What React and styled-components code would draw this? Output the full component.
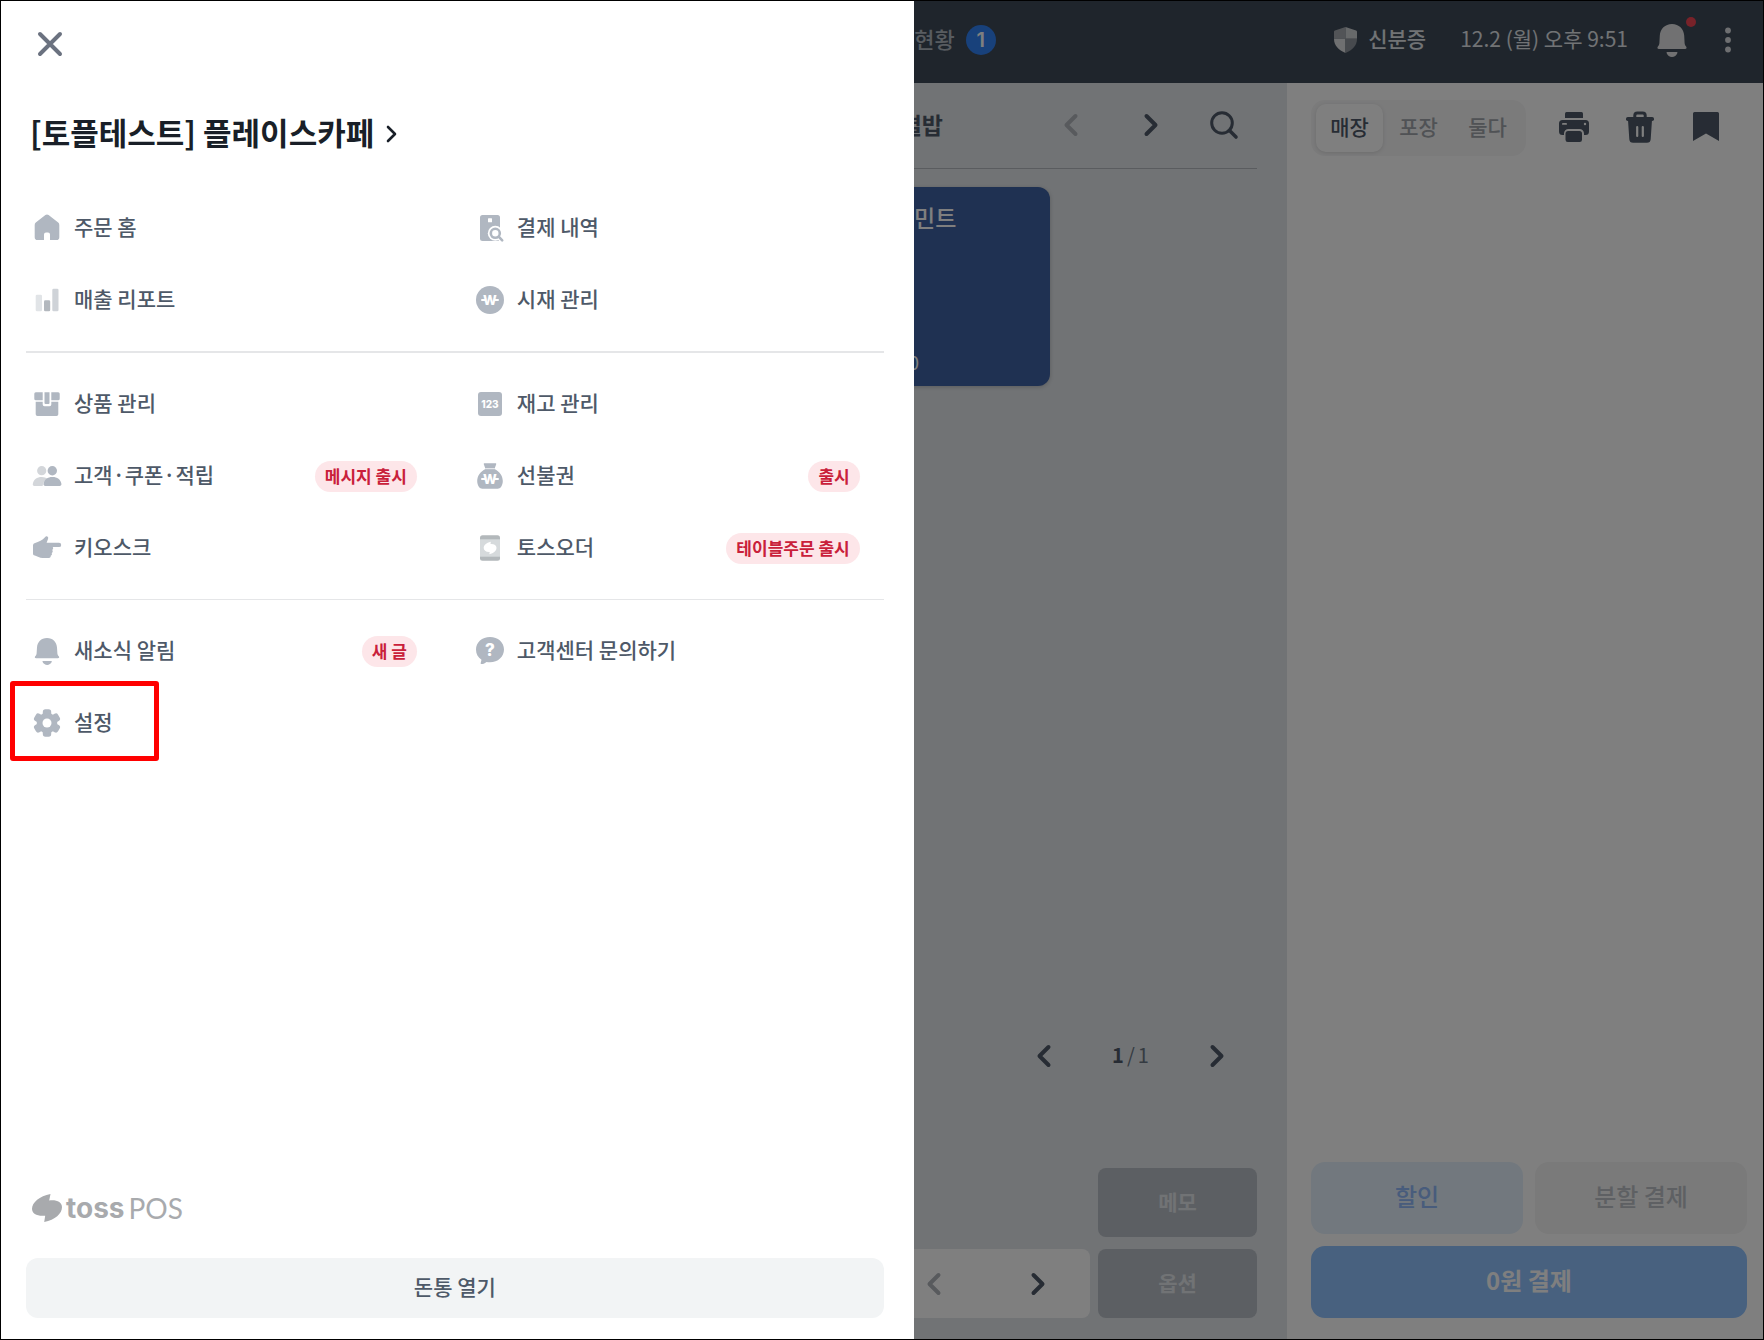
import React from "react";
import styled, { createGlobalStyle } from "styled-components";

const GlobalStyle = createGlobalStyle`
    * {
        box-sizing: border-box;
    }
    body {
        margin: 0;
        font-family: "Noto Sans CJK KR", "Noto Sans", sans-serif;
        font-size: 21px;
        line-height: 32px;
    }
    button {
        border: 0;
        padding: 0;
        background: none;
        color: inherit;
        font: inherit;
        cursor: pointer;
    }
    svg {
        display: block;
        flex: none;
        overflow: visible;
    }
`;

const Frame = styled.div`
    position: relative;
    display: flex;
    flex-direction: column;
    min-height: 100vh;
    border: 1px solid #000;
    overflow: hidden;
`;

// Korean glyphs sit low in their line box
const Label = styled.span`
    padding-bottom: 4px;
`;

/* ---------- order screen ---------- */

const TopBar = styled.header`
    display: flex;
    align-items: center;
    height: 82px;
    padding-right: 18px;
    background: #3e4a58;
    color: #e2e6ea;
`;

const TopTabs = styled.nav`
    display: flex;
    flex: 0 0 56%;
    justify-content: flex-end;
    align-items: center;
    gap: 11px;
    padding-bottom: 4px;
    color: #b0b8c1;
    font-size: 22px;
    font-weight: 500;
`;

const CountBadge = styled.span`
    width: 30px;
    height: 30px;
    margin-right: -18px;
    border-radius: 50%;
    background: #3182f6;
    color: #fff;
    font-family: Inter, sans-serif;
    font-size: 20px;
    font-weight: 600;
    line-height: 30px;
    text-align: center;
`;

const TopStatus = styled.div`
    display: flex;
    flex: 1;
    justify-content: flex-end;
    align-items: center;
    padding-bottom: 4px;
`;

const IdButton = styled.button`
    display: flex;
    align-items: center;
    gap: 11px;
    margin-right: 34px;
    font-weight: 500;
`;

const Clock = styled.time`
    padding-bottom: 4px;
`;

const BellButton = styled.button`
    position: relative;
    margin: 2px 24px 0 29px;
`;

const RedDot = styled.span`
    position: absolute;
    top: -7px;
    right: -9px;
    width: 10px;
    height: 10px;
    border-radius: 50%;
    background: #f04452;
`;

const Body = styled.div`
    display: flex;
    flex: 1;
`;

const Products = styled.main`
    display: flex;
    flex: 1;
    flex-direction: column;
    padding: 0 30px 21px 24px;
    background: #e2e6ea;
`;

const CategoryRow = styled.div`
    display: flex;
    align-items: center;
    height: 86px;
    padding-bottom: 2px;
    border-bottom: 1px solid #b4b9bf;
`;

const CategoryTabs = styled.nav`
    display: flex;
    flex: 1;
    justify-content: flex-end;
    padding: 0 88px 2px 0;
    color: #4e5968;
    font-size: 23px;
    font-weight: 700;
`;

const IconButton = styled.button`
    display: flex;
    justify-content: center;
    align-items: center;
    width: ${(props) => props.$width}px;
    height: 48px;
    color: ${(props) => (props.$faded ? "#b0b5bb" : "#4e5968")};
`;

const CardGrid = styled.div`
    display: grid;
    grid-template-columns: repeat(6, 1fr);
    gap: 8px;
    padding-top: 18px;
`;

const ProductCard = styled.button`
    display: flex;
    grid-column: 5;
    flex-direction: column;
    justify-content: space-between;
    align-items: flex-start;
    height: 199px;
    padding: 14px 20px 8px;
    border-radius: 12px;
    background: #3e62a4;
    box-shadow: 0 1px 4px rgba(0, 0, 0, 0.2);
    color: #fff;
    font-size: 23px;
    font-weight: 500;
`;

const Price = styled.span`
    font-size: 19px;
    font-weight: 400;
`;

const Pager = styled.div`
    display: flex;
    justify-content: flex-end;
    align-items: center;
    margin-top: auto;
    margin-bottom: 88px;
`;

const PageCount = styled.span`
    display: flex;
    justify-content: center;
    gap: 3px;
    width: 93px;
    padding-bottom: 2px;
    color: #6b7684;
    font-size: 20px;
    & b {
        color: #4e5968;
    }
`;

const Shortcuts = styled.div`
    display: grid;
    grid-template-columns: 1fr 159px;
    grid-auto-rows: 69px;
    gap: 12px 8px;
`;

const ShortcutBar = styled.div`
    display: flex;
    justify-content: flex-end;
    align-items: center;
    border-radius: 8px;
    background: #fff;
`;

const GrayButton = styled.button`
    grid-column: 2;
    padding-bottom: 4px;
    border-radius: 8px;
    background: #b8bec6;
    color: #e2e6ea;
    font-weight: 700;
`;

const OrderPanel = styled.aside`
    display: flex;
    flex: 0 0 476px;
    flex-direction: column;
    justify-content: space-between;
    padding: 17px 16px 21px 24px;
    background: #fff;
`;

const PanelTools = styled.div`
    display: flex;
    justify-content: space-between;
    align-items: center;
    padding-right: 8px;
`;

const Segments = styled.div`
    display: flex;
    gap: 2px;
    padding: 4px 5px;
    border-radius: 14px;
    background: #f6f6f7;
`;

const Segment = styled.button`
    width: 67px;
    height: 48px;
    padding-bottom: 4px;
    border-radius: 10px;
    background: ${(props) => (props.$active ? "#fff" : "none")};
    box-shadow: ${(props) => (props.$active ? "0 1px 4px rgba(0, 0, 0, 0.12)" : "none")};
    color: ${(props) => (props.$active ? "#4e5968" : "#a0a5ab")};
    font-weight: 500;
`;

const ToolIcons = styled.div`
    display: flex;
    padding-bottom: 3px;
`;

const PayButtons = styled.div`
    display: grid;
    grid-template-columns: 1fr 1fr;
    grid-auto-rows: 72px;
    gap: 12px;
`;

const payTones = {
    blue: "background: #e4f1fc; color: #90b8f8;",
    gray: "background: #f4f4f4; color: #bcc1c7;",
    primary: "background: #90c2fe; color: #fff; grid-column: 1 / 3; font-weight: 700;",
};

const PayButton = styled.button`
    padding-bottom: 4px;
    border-radius: 14px;
    font-size: 24px;
    font-weight: 500;
    ${(props) => payTones[props.$tone]}
`;

/* ---------- drawer ---------- */

const Backdrop = styled.div`
    position: absolute;
    inset: 0;
    background: rgba(0, 0, 0, 0.5);
`;

const Drawer = styled.div`
    display: flex;
    flex-direction: column;
    width: 51.8%;
    height: 100%;
    padding: 22px 30px 21px 25px;
    background: #fff;
    color: #4e5968;
    font-weight: 500;
`;

const CloseButton = styled.button`
    align-self: flex-start;
    margin-left: 11px;
    padding: 8px 0;
    color: #6b7280;
`;

const StoreButton = styled.button`
    display: flex;
    align-items: center;
    align-self: flex-start;
    gap: 12px;
    margin: 47px 0 36px 4px;
    color: #191f28;
    font-size: 31px;
    font-weight: 700;
    line-height: 40px;
`;

const MenuGroup = styled.ul`
    display: grid;
    grid-template-columns: 1fr 1fr;
    grid-auto-rows: 72px;
    column-gap: 28px;
    margin: 0;
    padding: 0;
    list-style: none;
`;

const Divider = styled.hr`
    width: 100%;
    height: ${(props) => props.$thickness}px;
    margin: 15px 0;
    border: 0;
    background: #e5e6e8;
`;

const MenuItem = styled.li`
    position: relative;
    display: flex;
`;

const MenuButton = styled.button`
    display: flex;
    flex: 1;
    align-items: center;
    gap: 13px;
    padding: 0 24px 0 7px;
    text-align: left;
`;

const Badge = styled.span`
    margin-left: auto;
    padding: 0 10px 2px;
    border-radius: 16px;
    background: #fde6e9;
    color: #c9203a;
    font-size: 17px;
    font-weight: 700;
    line-height: 29px;
`;

const Highlight = styled.span`
    position: absolute;
    top: -6px;
    left: -16px;
    width: 149px;
    height: 80px;
    border: 5px solid #f00;
    border-radius: 3px;
    pointer-events: none;
`;

const Brand = styled.div`
    display: flex;
    align-items: center;
    gap: 4px;
    margin: auto 0 34px 6px;
    color: #a8aaad;
    font-family: Inter, sans-serif;
    font-size: 28px;
    font-weight: 700;
`;

const BrandLight = styled.span`
    font-family: Lato, sans-serif;
    font-weight: 400;
`;

const DrawerAction = styled.button`
    height: 60px;
    padding-bottom: 4px;
    border-radius: 12px;
    background: #f2f4f5;
`;

/* ---------- icons ---------- */

const GRAY = "#b0b7c1";

const MenuIcon = ({ children }) => (
    <svg width="28" height="28" viewBox="0 0 28 28" fill={GRAY} aria-hidden="true">
        {children}
    </svg>
);

const IconText = ({ y, size, children }) => (
    <text
        x="14"
        y={y}
        fill="#fff"
        textAnchor="middle"
        fontFamily="Inter, sans-serif"
        fontSize={size}
        fontWeight="800"
    >
        {children}
    </text>
);

// W with the bar of the won sign sticking out on both sides
const Won = ({ y }) => (
    <>
        <IconText y={y} size="13">
            W
        </IconText>
        <path
            d={`M6 ${y - 5}h3M19 ${y - 5}h3`}
            stroke="#fff"
            strokeWidth="2"
            strokeLinecap="round"
        />
    </>
);

const icons = {
    home: (
        <path d="M12.4 1.1a2.6 2.6 0 0 1 3.2 0l9.6 7.5a3 3 0 0 1 1.1 2.3v12.3a2.8 2.8 0 0 1-2.8 2.8H17v-5.4a2 2 0 0 0-2-2h-2a2 2 0 0 0-2 2V26H4.5a2.8 2.8 0 0 1-2.8-2.8V10.9a3 3 0 0 1 1.1-2.3z" />
    ),
    report: (
        <>
            <rect x="2.7" y="8.7" width="6.3" height="16.6" rx="1.3" fill="#e1e4e7" />
            <rect x="11" y="14.3" width="6.2" height="11" rx="1.3" fill="#b3b8be" />
            <rect x="19.3" y="2.7" width="6.2" height="22.6" rx="1.3" fill="#cfd3d8" />
        </>
    ),
    receipt: (
        <>
            <rect x="4" y="1" width="20" height="26" rx="2.5" />
            <rect x="12" y="4.3" width="4" height="4" rx="0.5" fill="#fff" />
            <path d="M19.5 19.5 27 27" stroke="#fff" strokeWidth="5" />
            <circle cx="19.3" cy="19.3" r="7.5" fill="#fff" />
            <circle cx="19.3" cy="19.3" r="4.5" fill="none" stroke={GRAY} strokeWidth="2.6" />
            <path d="m22.7 22.7 3.5 3.7" stroke={GRAY} strokeWidth="2.6" strokeLinecap="round" />
        </>
    ),
    cash: (
        <>
            <circle cx="14" cy="14" r="14" />
            <Won y={19} />
        </>
    ),
    box: (
        <>
            <path d="M2.8 2.3h6.9v8H2.8a1.5 1.5 0 0 1-1.5-1.5v-5a1.5 1.5 0 0 1 1.5-1.5zM18.3 2.3h6.9a1.5 1.5 0 0 1 1.5 1.5v5a1.5 1.5 0 0 1-1.5 1.5h-6.9z" />
            <path d="M11.5 2.3h5V13a1 1 0 0 1-1 1h-3a1 1 0 0 1-1-1z" />
            <path d="M2.7 11.8h7v2.7a1.8 1.8 0 0 0 1.8 1.8h5a1.8 1.8 0 0 0 1.8-1.8v-2.7h7v12.4a1.8 1.8 0 0 1-1.8 1.8h-19a1.8 1.8 0 0 1-1.8-1.8z" />
        </>
    ),
    stock: (
        <>
            <rect x="2" y="2" width="24" height="24" rx="3" />
            <IconText y={18} size="10">
                123
            </IconText>
        </>
    ),
    people: (
        <>
            <g fill="#d3d6da">
                <circle cx="8.7" cy="8.7" r="4.6" />
                <path d="M8.7 15c2.6 0 4.3.7 5.5 1.8-2.7 1.5-4.2 4-4.6 7.2H1.5C.3 24-.4 23.2-.2 22 .5 17.6 4 15 8.7 15z" />
            </g>
            <circle cx="19.3" cy="8.7" r="4.7" />
            <path d="M19.4 15c5 0 8.3 2.6 9 6.8.2 1.3-.5 2.2-1.8 2.2H12.3c-1.3 0-2-.9-1.8-2.2.7-4.2 4-6.8 8.9-6.8z" />
        </>
    ),
    prepaid: (
        <>
            <path d="M8.5 1.3h11c.6 0 .9.5.7 1L18.5 7c5 2.3 8.3 7 8.3 12 0 2.4-.7 4.5-1.8 6-.8 1.2-1.9 1.7-3.3 1.7H6.3C4.9 26.7 3.8 26.200 3 25c-1.1-1.5-1.8-3.6-1.8-6 0-5 3.3-9.7 8.3-12L7.8 2.3c-.2-.5.1-1 .7-1z" />
            <path d="M9.3 6.7h9.4" stroke="#fff" strokeWidth="0.8" />
            <Won y={22} />
        </>
    ),
    kiosk: (
        <path d="M0 11.5c0-1 .5-1.800 1.5-2.2C6 7.5 9.5 6 12 3.2c.7-.8 1.4-1.2 2.3-.7 1 .5 1.1 1.6.7 2.6l-1.4 3.6H26a2.2 2.2 0 0 1 0 4.4h-6.3c.8.9.6 2.3-.5 2.9.9 1 .6 2.5-.5 3 .6 1.2.2 2.4-1 2.8.2 1.3-.5 2.2-1.8 2.2H9.5c-3 0-5-1.6-7.7-2.4C.6 21.2 0 20.6 0 19.4z" />
    ),
    order: (
        <>
            <rect x="4" y="1.3" width="20" height="25.4" rx="2.5" fill="#b3b8bb" />
            <rect x="4" y="5.3" width="20" height="17.4" fill="#d6dadc" />
            <path
                fill="#fff"
                d="M14.8 7.8 14.5 10c3.7-.2 6 1.4 6 3.8 0 3-2.7 5.5-7.2 6.4l.4-2.2c-3.7.2-6-1.4-6-3.9 0-2.9 2.6-5.4 7.1-6.3z"
            />
        </>
    ),
    bell: (
        <>
            <path d="M14 1c6 0 9.7 4.2 10 9.5l.4 6c.1 1.2.6 1.9 1.4 2.8.8 1 .3 2-.9 2H3.100c-1.2 0-1.7-1-.9-2 .8-.9 1.300-1.600 1.400-2.800l.4-6C4.300 5.200 8 1 14 1z" />
            <path d="M10.3 24H18c.7 0 1 .5.7 1-.9 1.8-2.5 2.9-4.5 2.9S10.500 26.800 9.600 25c-.3-.5 0-1 .7-1z" />
        </>
    ),
    help: (
        <>
            <path d="M14 0c8 0 14 5.3 14 12.5s-6 12.8-14 12.8c-1.2 0-2.4-.1-3.5-.4-1.4 1.2-3 2-5 2.2-.7 0-1-.5-.8-1.1l.8-3.300C2 20.5 0 17 0 12.5 0 5.3 6 0 14 0z" />
            <IconText y={19} size="17">
                ?
            </IconText>
        </>
    ),
    gear: (
        <>
            {[0, 60, 120].map((angle) => (
                <rect
                    key={angle}
                    x="9.8"
                    y="0.3"
                    width="8.4"
                    height="27.4"
                    rx="2.6"
                    transform={`rotate(${angle} 14 14)`}
                />
            ))}
            <circle cx="14" cy="14" r="10.3" />
            <circle cx="14" cy="14" r="4.5" fill="#fff" />
        </>
    ),
};

const Chevron = ({ left }) => (
    <svg width="14" height="24" viewBox="0 0 14 24" aria-hidden="true">
        <path
            d={left ? "M11.5 3 2.5 12l9 9" : "M2.5 3l9 9-9 9"}
            fill="none"
            stroke="currentColor"
            strokeWidth="4"
            strokeLinecap="round"
            strokeLinejoin="round"
        />
    </svg>
);

const SearchIcon = () => (
    <svg width="28" height="28" viewBox="0 0 28 28" fill="none" stroke="currentColor" strokeWidth="3">
        <circle cx="12" cy="12" r="10.3" />
        <path d="m19.5 19.5 6.5 6.5" strokeWidth="3.6" strokeLinecap="round" />
    </svg>
);

const ShieldIcon = () => (
    <svg width="23" height="26" viewBox="0 0 23 26">
        <path d="M11.5 0v11.7H0V4.8c0-.6.3-1 .9-1.2z" fill="#a4a9af" />
        <path d="M11.5 0v11.7H23V4.8c0-.6-.3-1-.9-1.2z" fill="#cfd2d5" />
        <path d="M0 11.7h11.5V26C4.5 23 0 18.5 0 11.7z" fill="#dfe1e3" />
        <path d="M23 11.7H11.5V26C18.5 23 23 18.5 23 11.7z" fill="#8f959c" />
    </svg>
);

const TopBell = () => (
    <svg width="30" height="34" viewBox="0 0 30 34" fill="#e2e3e4">
        <path d="M15 0c7 0 11.8 5 12.2 11.5l.4 7.5c.1 1.5.6 2.4 1.5 3.5 1 1.2.4 2.5-1 2.5H1.9c-1.4 0-2-1.3-1-2.5.9-1.1 1.4-2 1.5-3.5l.4-7.5C3.200 5 8 0 15 0z" />
        <path d="M10.5 28h9c.8 0 1.2.6.8 1.2-.9 2.3-2.8 3.8-5.3 3.8s-4.4-1.5-5.3-3.8c-.4-.6 0-1.2.8-1.2z" />
    </svg>
);

const MoreIcon = () => (
    <svg width="26" height="26" viewBox="0 0 26 26" fill="#dcdfe3">
        <circle cx="13" cy="3.5" r="2.9" />
        <circle cx="13" cy="13" r="2.9" />
        <circle cx="13" cy="22.5" r="2.9" />
    </svg>
);

const PrinterIcon = () => (
    <svg width="30" height="30" viewBox="0 0 30 30" fill="currentColor">
        <path d="M7.5 0h15A1.5 1.5 0 0 1 24 1.5V6H6V1.5A1.5 1.5 0 0 1 7.5 0z" />
        <path d="M3.5 8h23a3.5 3.5 0 0 1 3.5 3.5v8a3.5 3.5 0 0 1-3.5 3.5H25v-1.5a4.5 4.5 0 0 0-4.5-4.500h-11A4.5 4.5 0 0 0 5 21.5V23H3.500A3.5 3.5 0 0 1 0 19.5v-8A3.5 3.5 0 0 1 3.5 8z" />
        <path d="M9.5 19h11a2.5 2.5 0 0 1 2.5 2.500v6.2a2.3 2.3 0 0 1-2.3 2.3H8.800a2.3 2.3 0 0 1-2.300-2.300V21.500A2.5 2.5 0 0 1 9.500 19z" />
        <rect x="3" y="11" width="5" height="1.8" rx="0.9" fill="#fff" />
        <circle cx="26" cy="12" r="1.2" fill="#fff" />
    </svg>
);

const TrashIcon = () => (
    <svg width="28" height="32" viewBox="0 0 28 32" fill="currentColor">
        <path
            d="M8.8 6.5v-2A2.5 2.5 0 0 1 11.3 2h5.4a2.5 2.5 0 0 1 2.5 2.5v2"
            fill="none"
            stroke="currentColor"
            strokeWidth="3"
        />
        <rect x="0" y="6" width="28" height="4" rx="1.8" />
        <path d="M2 9h24l-1.3 19.3a3.8 3.8 0 0 1-3.8 3.5H7.1a3.8 3.8 0 0 1-3.8-3.5z" />
        <path d="M11.2 16v9M16.8 16v9" stroke="#fff" strokeWidth="2.2" strokeLinecap="round" />
    </svg>
);

const BookmarkIcon = () => (
    <svg width="26" height="29" viewBox="0 0 26 29" fill="currentColor">
        <path d="M1.5 0h23A1.5 1.5 0 0 1 26 1.5V29l-13-7.5L0 29V1.5A1.5 1.5 0 0 1 1.5 0z" />
    </svg>
);

const BrandMark = () => (
    <svg width="30" height="28" viewBox="0 0 30 28" fill="currentColor">
        <path d="M18.5 0 17.2 6.5C24.500 5.500 30 8.200 30 13.200c0 6.300-6.800 12.600-17.800 14.800l1-6.300C5.500 22.600 0 19.800 0 14.800 0 8.500 7.500 2 18.500 0z" />
    </svg>
);

/* ---------- data ---------- */

const menu = [
    [
        { icon: "home", label: "주문 홈" },
        { icon: "receipt", label: "결제 내역" },
        { icon: "report", label: "매출 리포트" },
        { icon: "cash", label: "시재 관리" },
    ],
    [
        { icon: "box", label: "상품 관리" },
        { icon: "stock", label: "재고 관리" },
        { icon: "people", label: "고객·쿠폰·적립", badge: "메시지 출시" },
        { icon: "prepaid", label: "선불권", badge: "출시" },
        { icon: "kiosk", label: "키오스크" },
        { icon: "order", label: "토스오더", badge: "테이블주문 출시" },
    ],
    [
        { icon: "bell", label: "새소식 알림", badge: "새 글" },
        { icon: "help", label: "고객센터 문의하기" },
        { icon: "gear", label: "설정", highlighted: true },
    ],
];

const orderTypes = ["매장", "포장", "둘다"];

function OrderScreen() {
    return (
        <>
            <TopBar>
                <TopTabs>
                    <Label>현황</Label>
                    <CountBadge>1</CountBadge>
                </TopTabs>
                <TopStatus>
                    <IdButton>
                        <ShieldIcon />
                        <Label>신분증</Label>
                    </IdButton>
                    <Clock>12.2 (월) 오후 9:51</Clock>
                    <BellButton aria-label="알림">
                        <TopBell />
                        <RedDot />
                    </BellButton>
                    <IconButton $width={34} aria-label="더보기">
                        <MoreIcon />
                    </IconButton>
                </TopStatus>
            </TopBar>
            <Body>
                <Products>
                    <CategoryRow>
                        <CategoryTabs>별밥</CategoryTabs>
                        <IconButton $width={80} $faded aria-label="이전 카테고리">
                            <Chevron left />
                        </IconButton>
                        <IconButton $width={80} aria-label="다음 카테고리">
                            <Chevron />
                        </IconButton>
                        <IconButton $width={66} aria-label="검색">
                            <SearchIcon />
                        </IconButton>
                    </CategoryRow>
                    <CardGrid>
                        <ProductCard>
                            페퍼민트
                            <Price>4,500</Price>
                        </ProductCard>
                    </CardGrid>
                    <Pager>
                        <IconButton $width={80} aria-label="이전 페이지">
                            <Chevron left />
                        </IconButton>
                        <PageCount>
                            <b>1</b>
                            <span>/</span>
                            <span>1</span>
                        </PageCount>
                        <IconButton $width={80} aria-label="다음 페이지">
                            <Chevron />
                        </IconButton>
                    </Pager>
                    <Shortcuts>
                        <GrayButton>메모</GrayButton>
                        <ShortcutBar>
                            <IconButton $width={104} $faded aria-label="이전">
                                <Chevron left />
                            </IconButton>
                            <IconButton $width={104} aria-label="다음">
                                <Chevron />
                            </IconButton>
                        </ShortcutBar>
                        <GrayButton>옵션</GrayButton>
                    </Shortcuts>
                </Products>
                <OrderPanel>
                    <PanelTools>
                        <Segments>
                            {orderTypes.map((type, index) => (
                                <Segment key={type} $active={index === 0}>
                                    {type}
                                </Segment>
                            ))}
                        </Segments>
                        <ToolIcons>
                            <IconButton $width={66} aria-label="인쇄">
                                <PrinterIcon />
                            </IconButton>
                            <IconButton $width={66} aria-label="삭제">
                                <TrashIcon />
                            </IconButton>
                            <IconButton $width={66} aria-label="보관">
                                <BookmarkIcon />
                            </IconButton>
                        </ToolIcons>
                    </PanelTools>
                    <PayButtons>
                        <PayButton $tone="blue">할인</PayButton>
                        <PayButton $tone="gray">분할 결제</PayButton>
                        <PayButton $tone="primary">0원 결제</PayButton>
                    </PayButtons>
                </OrderPanel>
            </Body>
        </>
    );
}

function MenuDrawer() {
    return (
        <Drawer>
            <CloseButton aria-label="닫기">
                <svg width="26" height="26" viewBox="0 0 26 26">
                    <path
                        d="M3 3l20 20M23 3L3 23"
                        stroke="currentColor"
                        strokeWidth="4"
                        strokeLinecap="round"
                    />
                </svg>
            </CloseButton>
            <StoreButton>
                <Label>[토플테스트] 플레이스카페</Label>
                <svg width="11" height="18" viewBox="0 0 11 18">
                    <path
                        d="M2 2l7 7-7 7"
                        fill="none"
                        stroke="currentColor"
                        strokeWidth="2.6"
                        strokeLinecap="round"
                        strokeLinejoin="round"
                    />
                </svg>
            </StoreButton>
            {menu.map((group, index) => (
                <React.Fragment key={group[0].label}>
                    {index > 0 && <Divider $thickness={index === 1 ? 2 : 1} />}
                    <MenuGroup>
                        {group.map((item) => (
                            <MenuItem key={item.label}>
                                <MenuButton>
                                    <MenuIcon>{icons[item.icon]}</MenuIcon>
                                    <Label>{item.label}</Label>
                                    {item.badge && <Badge>{item.badge}</Badge>}
                                </MenuButton>
                                {item.highlighted && <Highlight />}
                            </MenuItem>
                        ))}
                    </MenuGroup>
                </React.Fragment>
            ))}
            <Brand>
                <BrandMark />
                <span>toss</span>
                <BrandLight>POS</BrandLight>
            </Brand>
            <DrawerAction>돈통 열기</DrawerAction>
        </Drawer>
    );
}

export default function App() {
    return (
        <Frame>
            <GlobalStyle />
            <OrderScreen />
            <Backdrop>
                <MenuDrawer />
            </Backdrop>
        </Frame>
    );
}
